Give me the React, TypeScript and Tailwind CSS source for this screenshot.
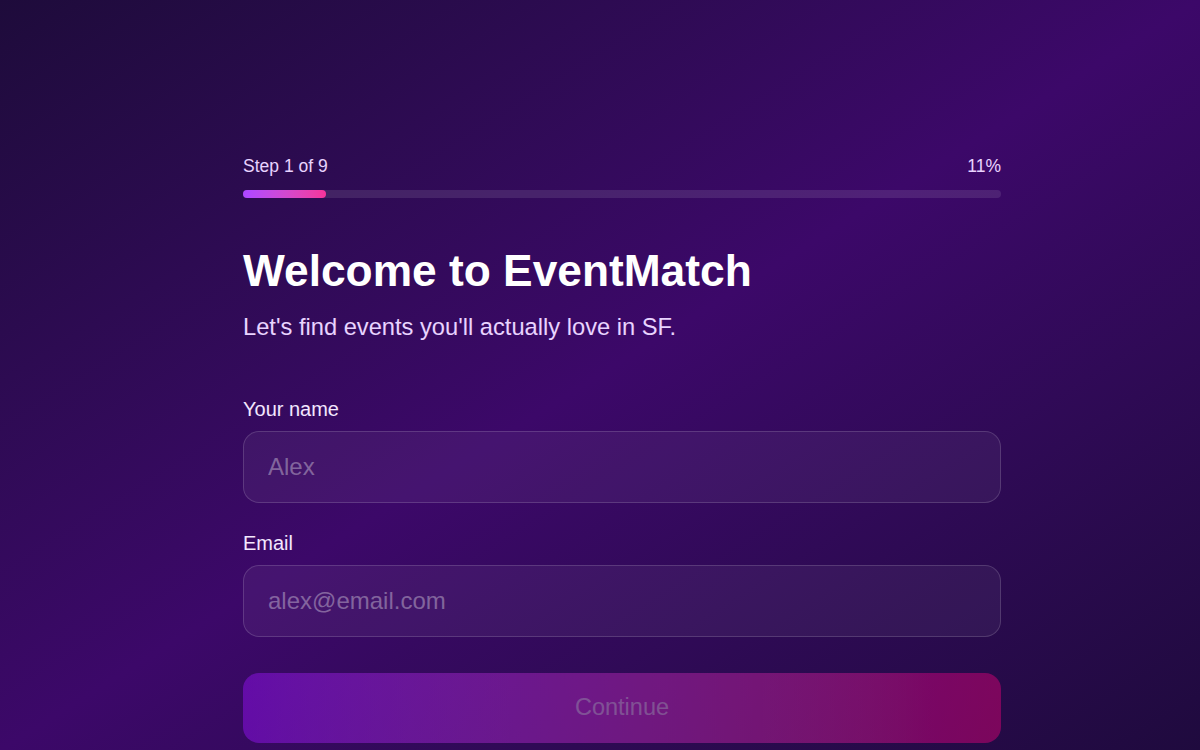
import { useState } from 'react';

const TOTAL_STEPS = 9;

export default function App() {
  const [name, setName] = useState('');
  const [email, setEmail] = useState('');
  const step = 1;
  const pct = Math.round((step / TOTAL_STEPS) * 100);
  const canContinue = name.trim() !== '' && email.trim() !== '';

  return (
    <div className="min-h-screen w-full overflow-hidden bg-gradient-to-br from-[#1e0b3b] via-[#3c0869] to-[#1f0a3e] font-['Liberation_Sans',Arial,sans-serif]">
      <div className="ml-[243px] w-[758px] pt-[154px]">
        {/* progress header */}
        <div className="flex items-center justify-between text-[17.5px] leading-[24px] text-purple-200">
          <span>Step {step} of {TOTAL_STEPS}</span>
          <span>{pct}%</span>
        </div>
        <div className="mt-3 h-2 w-full rounded-full bg-white/10">
          <div
            className="h-2 rounded-full bg-gradient-to-r from-purple-500 to-pink-500"
            style={{ width: `${pct}%` }}
          />
        </div>

        <h1 className="mt-[47px] text-[44.3px] font-bold leading-[52px] text-white">Welcome to EventMatch</h1>
        <p className="mt-[14px] text-[23.7px] leading-[32px] text-purple-200">
          Let's find events you'll actually love in SF.
        </p>

        <div className="mt-[54px] flex flex-col gap-7">
          <div>
            <label className="block text-[20px] leading-[24px] text-purple-100">Your name</label>
            <input
              value={name}
              onChange={e => setName(e.target.value)}
              placeholder="Alex"
              className="mt-[10px] h-[72px] w-full rounded-2xl border border-white/15 bg-white/5 px-6 text-[24px] text-white placeholder:text-white/35 outline-none"
            />
          </div>
          <div>
            <label className="block text-[20px] leading-[24px] text-purple-100">Email</label>
            <input
              value={email}
              onChange={e => setEmail(e.target.value)}
              placeholder="alex@email.com"
              className="mt-[10px] h-[72px] w-full rounded-2xl border border-white/15 bg-white/5 px-6 text-[24px] text-white placeholder:text-white/35 outline-none"
            />
          </div>
        </div>

        <button
          disabled={!canContinue}
          className="mt-9 h-[70px] w-full rounded-2xl bg-gradient-to-r from-purple-600 to-pink-600 text-[23.5px] text-white disabled:opacity-45 disabled:text-white/60"
        >
          Continue
        </button>
      </div>
    </div>
  );
}
